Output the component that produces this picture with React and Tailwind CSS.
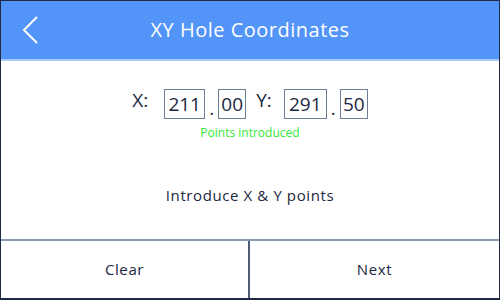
import React from 'react';

const NumBox = ({ value, w }) => (
    <div className={`${w} h-[30px] border border-[#6f7d93] flex items-center justify-center text-[19px] text-[#1c2742]`}>
        {value}
    </div>
);

const Dot = () => <span className="self-end mx-[4px] mb-[1px] text-[19px] leading-none text-[#1c2742]">.</span>;

export default function App() {
    return (
        <div
            className="w-[500px] h-[300px] flex flex-col bg-white border-x border-t border-b-2 border-[#1e2a44] overflow-hidden"
            style={{ fontFamily: '"Open Sans", Inter, sans-serif' }}
        >
            {/* Header */}
            <div className="h-[60px] shrink-0 bg-[#5294f8] border-b-2 border-[#a9c9f9] relative flex items-center justify-center">
                <button className="absolute left-[20px] top-[14px] text-white">
                    <svg width="22" height="30" viewBox="0 0 22 30" fill="none" stroke="white" strokeWidth="2">
                        <path d="M16 2 L3 15 L16 28" />
                    </svg>
                </button>
                <h1 className="text-white text-[20px] tracking-[0.5px]">XY Hole Coordinates</h1>
            </div>

            {/* Body */}
            <div className="flex-1 flex flex-col items-center">
                <div className="mt-[28px] flex items-center text-[#1c2742]">
                    <span className="text-[19px] mr-[16px] -mt-[8px]">X:</span>
                    <NumBox value="211" w="w-[41px]" />
                    <Dot />
                    <NumBox value="00" w="w-[28px]" />
                    <span className="text-[19px] ml-[10px] mr-[12px] -mt-[8px]">Y:</span>
                    <NumBox value="291" w="w-[43px]" />
                    <Dot />
                    <NumBox value="50" w="w-[28px]" />
                </div>
                <p className="mt-[5px] text-[12px] text-[#33e933]">Points introduced</p>
                <p className="mt-[42px] text-[15px] tracking-[0.6px] text-[#1c2742]">Introduce X &amp; Y points</p>
            </div>

            {/* Buttons */}
            <div className="h-[59px] shrink-0 grid grid-cols-2 border-t-2 border-[#8c9ab0]">
                <button className="text-[15px] tracking-[0.6px] text-[#1c2742] border-r-2 border-[#4b5b78]">Clear</button>
                <button className="text-[15px] tracking-[0.6px] text-[#1c2742]">Next</button>
            </div>
        </div>
    );
}
